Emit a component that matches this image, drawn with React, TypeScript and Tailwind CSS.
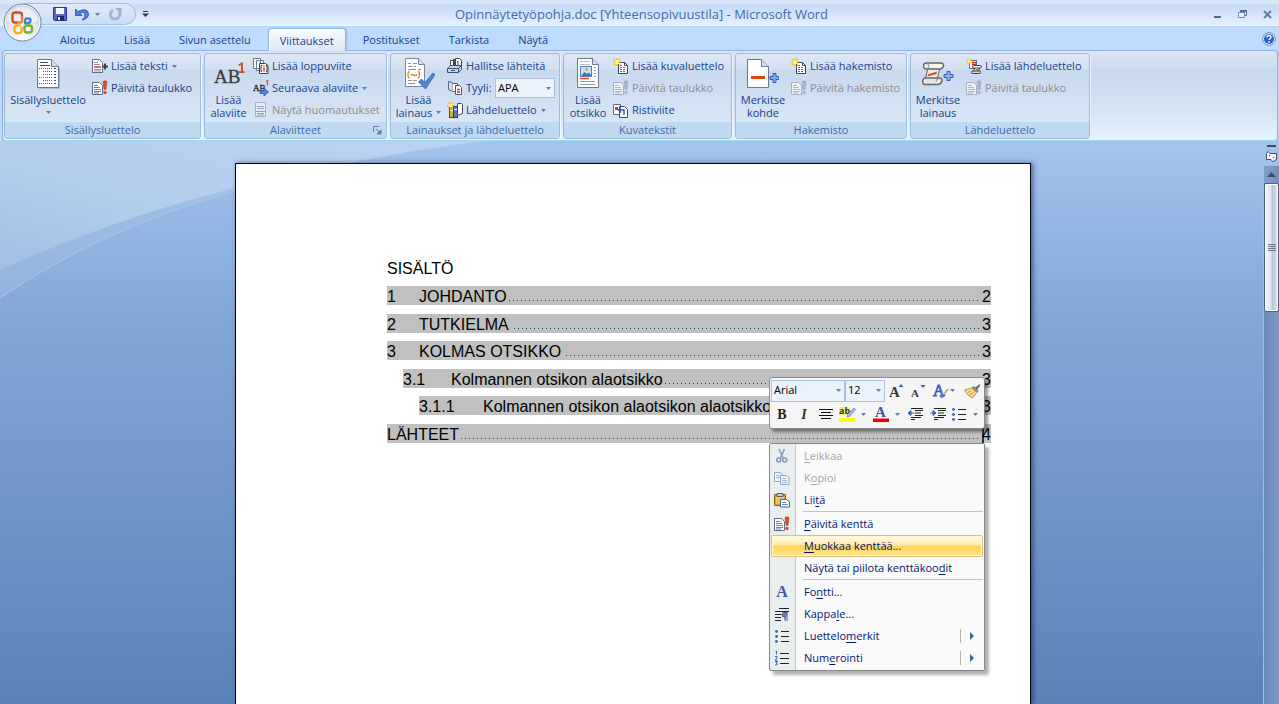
import React from "react";

const NAVY = "#2b3a5c";

function Caret({ className = "" }: { className?: string }) {
  return (
    <svg className={"shrink-0 " + className} width="5" height="3" viewBox="0 0 5 3" aria-hidden="true">
      <path d="M0 0h5L2.5 3z" fill="#5a7db5" />
    </svg>
  );
}

function Svg16({ children }: { children: React.ReactNode }) {
  return (
    <svg className="shrink-0" width="16" height="16" viewBox="0 0 16 16" aria-hidden="true">
      {children}
    </svg>
  );
}

function Svg32({ children }: { children: React.ReactNode }) {
  return (
    <svg className="shrink-0" width="32" height="32" viewBox="0 0 32 32" aria-hidden="true">
      {children}
    </svg>
  );
}

const Star = () => (
  <g>
    <path d="M4 0v8M0 4h8M1 1l6 6M7 1L1 7" stroke="#f2b61c" strokeWidth="1.2" />
    <circle cx="4" cy="4" r="2.2" fill="#fff27a" />
  </g>
);

/* ---- large icons ---- */

const TocIcon = () => (
  <Svg32>
    <path d="M5.5 1.5h14l7 7v21h-21z" fill="#fff" stroke="#6b7890" />
    <path d="M19.5 1.5v7h7" fill="#d5deec" stroke="#6b7890" />
    <path d="M8 4.5h8M8 7.5h10" stroke="#444f63" />
    <g stroke="#53647f" strokeDasharray="1 1">
      <path d="M9 10.5h12M11 13.5h10M11 16.5h10M9 19.5h12M11 22.5h10M9 25.5h12" />
    </g>
    <path d="M22 10.5h2M22 13.5h2M22 16.5h2M22 19.5h2M22 22.5h2M22 25.5h2M7 10.5h1M7 19.5h1M7 25.5h1" stroke="#444f63" />
    <path d="M27.5 10v20.500H7" fill="none" stroke="#7f8ca3" strokeOpacity=".5" />
  </Svg32>
);

const FootnoteIcon = () => (
  <Svg32>
    <text x="1" y="25" fontSize="19" fontFamily="Liberation Serif, serif" fill="#3c3c3c" stroke="#3c3c3c" strokeWidth=".3">AB</text>
    <path d="M26 7.500l2.500-2h.5V14M26 14h5.500" fill="none" stroke="#d9532c" strokeWidth="2" />
  </Svg32>
);

const CitationIcon = () => (
  <Svg32>
    <path d="M2.5.5h13l6 6v22h-19z" fill="#fff" stroke="#7b8799" />
    <path d="M15.5.5v6h6" fill="#d9e1ee" stroke="#7b8799" />
    <path d="M5 5.500h3M10 5.500h4M5 8.500h4M11 8.500h2M15 11.500h3M5 11.500h8M5 22.500h4M10 22.500h4M5 25.500h7" stroke="#8d95a3" />
    <path d="M6.500 13.500q-1.500 0-1.500 3 0 3.500 1.500 3.500M15 13.500q1.500 0 1.500 3 0 3.500-1.500 3.500M7.500 17.500q1.700-2 3.200-.5t3.300-.5" fill="none" stroke="#d9812f" strokeWidth="1.300" />
    <path d="M15.500 24l3-3 3.500 3.500 8-9.500 2 1.500L22.500 31z" fill="#4b86d8" stroke="#2d5da8" strokeWidth=".7" />
  </Svg32>
);

const CaptionIcon = () => (
  <Svg32>
    <path d="M5.5.5h15l6 6v23h-21z" fill="#fff" stroke="#6b7890" />
    <path d="M20.5.5v6h6" fill="#d5deec" stroke="#6b7890" />
    <path d="M8 3.500h10M8 6.500h10" stroke="#b6bfcd" />
    <rect x="8.500" y="8.500" width="11" height="10" fill="#c3e2fb" stroke="#5b7fb5" />
    <path d="M9 18l3.500-4 2.500 2 2-1.500 2.500 3.500z" fill="#3a76b8" />
    <circle cx="14.500" cy="11.500" r="1.400" fill="#f0a030" />
    <path d="M8 20.500h9" stroke="#d9472b" strokeWidth="1.500" />
    <path d="M8 23.500h15M8 26.500h15M22 9.500h2M22 12.500h2M22 15.500h2M22 18.500h2" stroke="#8f98a8" />
  </Svg32>
);

const MarkEntryIcon = () => (
  <Svg32>
    <path d="M.5 1.500h14l7 7v21H.5z" fill="#fff" stroke="#6b7890" />
    <path d="M14.5 1.500v7h7" fill="#d5deec" stroke="#6b7890" />
    <rect x="4" y="18" width="14" height="3" fill="#e0440c" />
    <path d="M26 15.500h3v3h3v3h-3v3h-3v-3h-3v-3h3z" fill="#7fa8e8" stroke="#2f5fb3" />
  </Svg32>
);

const MarkCitationIcon = () => (
  <Svg32>
    <path d="M6 10h12l-3 12H3z" fill="#efede9" stroke="#747478" strokeWidth="1.200" />
    <path d="M4.500 5h14.500q3 .5 2.500 3t-3.500 3H4.500Q1.500 11 1.500 8t3-3z" fill="#f7f6f3" stroke="#66666a" strokeWidth="1.400" />
    <path d="M4 10.500q3 0 3-2.500t-2.500-2" fill="none" stroke="#8a8a8e" />
    <path d="M3 20h14.500q3 .5 2.500 3t-3.500 3.500H3Q0 26 .700 23T3 20z" fill="#e6e4e0" stroke="#66666a" strokeWidth="1.400" />
    <path d="M17 20.500q-3 .5-3 3" fill="none" stroke="#8a8a8e" />
    <path d="M6 16.500l9-3-.5 2.500-9 2.500z" fill="#d9472b" />
    <path d="M25 13.500h3v3h3v3h-3v3h-3v-3h-3v-3h3z" fill="#8fb2ea" stroke="#2f5fb3" />
  </Svg32>
);

/* ---- small icons ---- */

const AddTextIcon = () => (
  <Svg16>
    <path d="M.5 1.500h7l3 3v10H.5z" fill="#fff" stroke="#5f6c84" />
    <path d="M2 4.500h4M2 6.500h6M2 11.500h7M2 13h7" stroke="#8892a3" />
    <path d="M2 9h7" stroke="#dd3b1e" strokeWidth="1.500" />
    <path d="M13 5.500v6M10.500 8.500H16" stroke="#3b4048" strokeWidth="2" />
  </Svg16>
);

const UpdateTableIcon = ({ muted = false }: { muted?: boolean }) => (
  <Svg16>
    <path d="M.5 2.500h7l3 3v9H.5z" fill={muted ? "#eef2f8" : "#fff"} stroke={muted ? "#a3afc2" : "#5f6d86"} />
    <path d="M2 5.500h4M2 7.500h6M2 9.500h7M2 11.500h7M2 13h5" stroke={muted ? "#a9b8d0" : "#6f8098"} />
    <path d="M11 1.500q2-1.500 4 0L14 9.500h-2z" fill={muted ? "#a7b4cb" : "#e04a21"} stroke={muted ? "#93a1ba" : "#b93312"} strokeWidth=".5" />
    <circle cx="13" cy="12.500" r="1.700" fill={muted ? "#a7b4cb" : "#e04a21"} />
  </Svg16>
);

const EndnoteIcon = () => (
  <Svg16>
    <path d="M.5.5h7v10h-7zM3.500 2.500h7v10h-7z" fill="#fff" stroke="#6b7890" />
    <path d="M6.500 5.500h6l2.500 2v8H6.500z" fill="#fff" stroke="#3c4658" />
    <path d="M9 7.500H8v6h1M13 7.500h1v6h-1" fill="none" stroke="#3c3c3c" />
    <path d="M11 7.500v1M11 9.500v4" stroke="#d22a1a" strokeWidth="1.500" />
  </Svg16>
);

const NextFootnoteIcon = () => (
  <Svg16>
    <text x="0" y="11" fontSize="9" fontFamily="Liberation Serif, serif" fill="#222" stroke="#222" strokeWidth=".3">AB</text>
    <path d="M13 1.500l1.500-1v5" fill="none" stroke="#d9532c" strokeWidth="1.300" />
    <path d="M7 10.500h4V8l4.500 4L11 16v-2.500H7z" fill="#4f86de" stroke="#264f9c" strokeWidth=".7" />
  </Svg16>
);

const ShowNotesIcon = () => (
  <Svg16>
    <path d="M2.500.5h10v14h-10z" fill="#e8eef7" stroke="#9fb0cc" />
    <path d="M4 4.500h7M4 6.500h7M2 9.500h11M4 11.500h7M4 13h7" stroke="#96a6c2" />
  </Svg16>
);

const ManageSourcesIcon = () => (
  <Svg16>
    <path d="M3.500 2.500h4v7h-4zM6.500 1.500h4v8h-4z" fill="#fff" stroke="#3c4658" />
    <path d="M8.500.5h4l2 2v7h-6z" fill="#fff" stroke="#3c4658" />
    <path d="M11 3v4M10 4l1-1" stroke="#3c4658" />
    <path d="M1.500 9.500l2-2h11v4l-3 3h-11v-4z" fill="#c3d4ee" stroke="#3a5079" />
    <path d="M.5 10.500h11v4M11.500 10.500l3-3" fill="none" stroke="#3a5079" />
    <path d="M4 12.500h4" stroke="#3a5079" />
  </Svg16>
);

const StyleIcon = () => (
  <Svg16>
    <path d="M1.500 1.500l4 1v9l-4-2z" fill="#cfdaea" stroke="#5b6a84" />
    <path d="M5.500 3.500h5v8h-5" fill="#fff" stroke="#5b6a84" />
    <path d="M8.500 5.500h4l2 2v7h-6z" fill="#fff" stroke="#4a566c" />
    <path d="M10 9.500h3M10 12h3" stroke="#d3301e" strokeWidth="1.500" />
  </Svg16>
);

const BibliographyIcon = () => (
  <Svg16>
    <rect x="2.500" y="5.500" width="4" height="10" fill="#e2ad26" stroke="#59461a" />
    <rect x="6.500" y="4.500" width="4" height="11" fill="#5b7dc0" stroke="#2d3b5e" />
    <path d="M10.500 1.500h4l1 1v9l-5 2z" fill="#fff" stroke="#3c4658" />
    <path d="M3 8.500h3M7 7.500h3" stroke="#fff4c8" />
    <g transform="scale(.9)"><Star /></g>
  </Svg16>
);

const NewListIcon = () => (
  <Svg16>
    <path d="M5.500 4.500h6l3 3v8h-9z" fill="#fff" stroke="#3c4658" />
    <path d="M11.500 4.500v3h3" fill="none" stroke="#3c4658" />
    <path d="M7 7.500h3M7 9.500h6M7 11.500h6M7 13.500h6" stroke="#5f6d86" strokeDasharray="2 1" />
    <Star />
  </Svg16>
);

const CrossRefIcon = () => (
  <Svg16>
    <path d="M.5 2.500h7v10h-7z" fill="#fff" stroke="#5f6d86" />
    <rect x="2" y="5" width="3" height="3" fill="#e0361e" />
    <path d="M6.500 4.500h5l3 3v8h-8z" fill="#fff" stroke="#3c4658" />
    <path d="M6 8h5v5M8 5.500L5.500 8 8 10.500" fill="none" stroke="#2d56b0" strokeWidth="1.400" />
  </Svg16>
);

const NewAuthoritiesIcon = () => (
  <Svg16>
    <path d="M3.500 2.500h7v8h-7z" fill="#fff" stroke="#5f6d86" />
    <path d="M6 4.500h4M6 6.500h4" stroke="#d9301e" strokeWidth="1.300" />
    <path d="M9 9h5l-1.500 4.500h-5z" fill="#f4f1ec" stroke="#4c4c50" />
    <rect x="6.500" y="7.500" width="9" height="2.500" rx="1.200" fill="#fff" stroke="#3c3c40" />
    <rect x="5.500" y="13" width="9" height="2.500" rx="1.200" fill="#e0ddd8" stroke="#3c3c40" />
    <path d="M9.500 12l3-.7" stroke="#d9472b" strokeWidth="1.200" />
    <g transform="scale(.8)"><Star /></g>
  </Svg16>
);

/* ---- ribbon ---- */

type Small = { icon: React.ReactNode; text: string; caret?: boolean; off?: boolean };

function SmallButton({ icon, text, caret, off }: Small) {
  return (
    <button disabled={off} className={"flex h-[22px] items-center gap-[3px] whitespace-nowrap " + (off ? "text-[#8d8d8d]" : "text-[#15428b]")}>
      {icon}
      {text}
      {caret && <Caret className="ml-px" />}
    </button>
  );
}

function BigButton({ icon, lines, caret, width }: { icon: React.ReactNode; lines: string[]; caret?: boolean; width: string }) {
  const single = lines.length === 1;
  return (
    <button className={"flex shrink-0 flex-col items-center gap-[3px] pt-[3px] leading-[13px] whitespace-nowrap " + width}>
      {icon}
      <span className="flex flex-col items-center">
        <span>{lines[0]}</span>
        <span className="flex h-[13px] items-center gap-1">
          {!single && lines[1]}
          {caret && <Caret />}
        </span>
      </span>
    </button>
  );
}

function Group({ title, width, launcher, children }: { title: string; width: string; launcher?: boolean; children: React.ReactNode }) {
  return (
    <section
      aria-label={title}
      className={"flex h-[86px] shrink-0 flex-col overflow-hidden rounded-[3px] border border-[#9ebbdd] bg-[linear-gradient(#dde8f5_0,#d2e0f1_15px,#c8d9ee_16px,#dceaf7_100%)] shadow-[1px_1px_0_#eef6ff] " + width}
    >
      <div className="flex flex-1 pt-px">{children}</div>
      <h2 className="relative h-4 bg-[#c1d8f1] text-center leading-[15px] text-[#3e6aaa]">
        {title}
        {launcher && (
          <button aria-label={title + ", asetukset"} className="absolute top-1 right-1">
            <svg width="9" height="9" viewBox="0 0 9 9" aria-hidden="true">
              <path d="M.5 6V.5H6" fill="none" stroke="#5f82b4" />
              <path d="M3 3l4 4M8 4v4H4z" fill="#5f82b4" stroke="#5f82b4" />
            </svg>
          </button>
        )}
      </h2>
    </section>
  );
}

const Col = ({ children }: { children: React.ReactNode }) => <div className="flex flex-col items-start pl-px">{children}</div>;

function Combo({ label, value, className }: { label: string; value: string; className: string }) {
  return (
    <span className={"relative flex " + className}>
      <select aria-label={label} defaultValue={value} className="w-full appearance-none border border-[#abc1de] bg-[#eaf2fb] pl-[2px] text-black outline-none">
        <option>{value}</option>
      </select>
      <span className="pointer-events-none absolute inset-y-0 right-[4px] flex items-center"><Caret /></span>
    </span>
  );
}

function Ribbon() {
  return (
    <div className="mr-px ml-[2px] flex h-[91px] gap-[3px] rounded-[4px] border border-[#8db2e3] border-b-[#9dd6ee] bg-[linear-gradient(#dbe6f4_0,#cfddec_17px,#c6d8ee_18px,#d5e4f1_60px,#e4f5ff_100%)] pt-[2px] pl-px shadow-[0_1px_1px_#8aa8cc]">
      <Group title="Sisällysluettelo" width="w-[197px]">
        <BigButton width="w-[86px]" icon={<TocIcon />} lines={["Sisällysluettelo"]} caret />
        <Col>
          <SmallButton icon={<AddTextIcon />} text="Lisää teksti" caret />
          <SmallButton icon={<UpdateTableIcon />} text="Päivitä taulukko" />
        </Col>
      </Group>
      <Group title="Alaviitteet" width="w-[183px]" launcher>
        <BigButton width="w-[47px]" icon={<FootnoteIcon />} lines={["Lisää", "alaviite"]} />
        <Col>
          <SmallButton icon={<EndnoteIcon />} text="Lisää loppuviite" />
          <SmallButton icon={<NextFootnoteIcon />} text="Seuraava alaviite" caret />
          <SmallButton icon={<ShowNotesIcon />} text="Näytä huomautukset" off />
        </Col>
      </Group>
      <Group title="Lainaukset ja lähdeluettelo" width="w-[170px]">
        <BigButton width="w-[55px]" icon={<CitationIcon />} lines={["Lisää", "lainaus"]} caret />
        <Col>
          <SmallButton icon={<ManageSourcesIcon />} text="Hallitse lähteitä" />
          <div className="flex h-[22px] items-center gap-[3px]">
            <StyleIcon />
            <span className="w-[26px]">Tyyli:</span>
            <Combo label="Tyyli" value="APA" className="h-[20px] w-[60px]" />
          </div>
          <SmallButton icon={<BibliographyIcon />} text="Lähdeluettelo" caret />
        </Col>
      </Group>
      <Group title="Kuvatekstit" width="w-[169px]">
        <BigButton width="w-[48px]" icon={<CaptionIcon />} lines={["Lisää", "otsikko"]} />
        <Col>
          <SmallButton icon={<NewListIcon />} text="Lisää kuvaluettelo" />
          <SmallButton icon={<UpdateTableIcon muted />} text="Päivitä taulukko" off />
          <SmallButton icon={<CrossRefIcon />} text="Ristiviite" />
        </Col>
      </Group>
      <Group title="Hakemisto" width="w-[172px]">
        <BigButton width="w-[54px]" icon={<MarkEntryIcon />} lines={["Merkitse", "kohde"]} />
        <Col>
          <SmallButton icon={<NewListIcon />} text="Lisää hakemisto" />
          <SmallButton icon={<UpdateTableIcon muted />} text="Päivitä hakemisto" off />
        </Col>
      </Group>
      <Group title="Lähdeluettelo" width="w-[180px]">
        <BigButton width="w-[54px]" icon={<MarkCitationIcon />} lines={["Merkitse", "lainaus"]} />
        <Col>
          <SmallButton icon={<NewAuthoritiesIcon />} text="Lisää lähdeluettelo" />
          <SmallButton icon={<UpdateTableIcon muted />} text="Päivitä taulukko" off />
        </Col>
      </Group>
    </div>
  );
}

/* ---- title bar and tabs ---- */

const OfficeButton = () => (
  <button aria-label="Office-painike" className="absolute top-[2px] left-[2px] z-10">
    <svg width="41" height="41" viewBox="0 0 41 41" aria-hidden="true">
      <defs>
        <radialGradient id="orb" cx=".5" cy=".8" r=".8">
          <stop offset="0" stopColor="#fff" />
          <stop offset=".5" stopColor="#e2e7ee" />
          <stop offset="1" stopColor="#aebccd" />
        </radialGradient>
      </defs>
      <circle cx="20.500" cy="20.500" r="18.500" fill="url(#orb)" stroke="#7388a8" />
      <circle cx="20.500" cy="20.500" r="17.300" fill="none" stroke="#fff" strokeOpacity=".8" />
      <path d="M5 19a15.500 14.500 0 0 1 31 0q-15 5-31 0z" fill="#f7f9fc" opacity=".7" />
      <g fill="none" strokeWidth="2.400" strokeLinejoin="round">
        <path d="M15.500 20.500h-2.500q-2.500 0-2.500-2.500v-5q0-2.500 2.500-2.500h4.500q2.500 0 2.500 2.500v3" stroke="#dd4a22" />
        <path d="M20 14v4.500q0 2-2 2h-3" stroke="#f0842c" />
        <path d="M23 16.500h3.500q2 0 2 2t-2 2.500h-3.500v-4.500" stroke="#3f86d0" />
        <path d="M18.500 23.500h-3.500q-2.500 0-2.500 2.500v2.500q0 2.500 2.500 2.500h2.500q2 0 2-2v-4" stroke="#f3b21b" />
        <path d="M22.500 24v4q0 2.500 2.500 2.500h2.500q2.500 0 2.500-2.500v-2q0-2.500-2.500-2.500h-5" stroke="#76ae2a" />
      </g>
    </svg>
  </button>
);

function TitleBar() {
  return (
    <header className="grid h-[27px] grid-cols-[1fr_auto_1fr] border-b border-[#b3d8f4] bg-[linear-gradient(#dce9fb_0,#d5e4fa_4px,#c5daf6_5px,#e3efff_24px,#f0f7ff_100%)]">
      <div className="flex items-center pl-[24px]">
        <div className="flex h-[22px] items-center rounded-r-[11px] border border-[#a4bde0] bg-[linear-gradient(#dfebfb,#cbdcf4)] pl-[28px]">
          <button aria-label="Tallenna" className="mr-2">
            <svg width="14" height="14" viewBox="0 0 14 14" aria-hidden="true">
              <path d="M.5.5h13v13h-12l-1-1z" fill="#5a66c8" stroke="#2c3690" />
              <path d="M3 1h8v6H3z" fill="#f4f7ff" />
              <path d="M4 9h7v4H4z" fill="#1f2766" />
              <path d="M5 10h2v3H5z" fill="#fff" />
            </svg>
          </button>
          <button aria-label="Kumoa" className="mr-[6px]">
            <svg width="14" height="13" viewBox="0 0 14 13" aria-hidden="true">
              <path d="M.5 1v6.500h6.500L5 5.500q3.500-2 4.800.2Q11 9 7 12q7-1.500 6.500-6.500Q12-1 3 3.500z" fill="#4f7edb" stroke="#2b50a4" strokeWidth=".8" />
            </svg>
          </button>
          <button aria-label="Kumoa-luettelo" className="mr-[9px]"><Caret /></button>
          <button aria-label="Toista" disabled className="mr-[13px]">
            <svg width="13" height="13" viewBox="0 0 13 13" aria-hidden="true">
              <path d="M4 2.200A4.700 4.700 0 1 0 10 4" fill="none" stroke="#a3b4d0" strokeWidth="2.800" />
              <path d="M6 0h6.500v6.500z" fill="#a3b4d0" />
            </svg>
          </button>
        </div>
        <button aria-label="Mukauta pikatyökaluriviä" className="ml-[6px]">
          <svg width="7" height="6" viewBox="0 0 7 6" aria-hidden="true">
            <path d="M1 .5h5" stroke={NAVY} />
            <path d="M0 2.500h7L3.500 6z" fill={NAVY} />
          </svg>
        </button>
      </div>
      <h1 className="pl-1 text-center text-[13px] leading-[28px] whitespace-nowrap text-[#3e6aaa]">
        Opinnäytetyöpohja.doc [Yhteensopivuustila] - Microsoft Word
      </h1>
      <div className="flex items-center justify-end gap-[16px] pr-[7px]">
        <button aria-label="Pienennä">
          <svg width="9" height="10" viewBox="0 0 9 10" aria-hidden="true"><path d="M1 8h7" stroke="#596b88" strokeWidth="2" /></svg>
        </button>
        <button aria-label="Palauta">
          <svg width="9" height="8" viewBox="0 0 9 8" aria-hidden="true">
            <path d="M2.500 2V.5h6v5H7" fill="none" stroke="#596b88" />
            <path d="M.5 2.500h6v5h-6z" fill="#e9f1fc" stroke="#7088b0" />
            <path d="M2 1h7" stroke="#596b88" strokeWidth="2" />
          </svg>
        </button>
        <button aria-label="Sulje">
          <svg width="9" height="9" viewBox="0 0 9 9" aria-hidden="true"><path d="M1 1l7 7M8 1L1 8" stroke="#657a9e" strokeWidth="2" /></svg>
        </button>
      </div>
    </header>
  );
}

const TABS = ["Aloitus", "Lisää", "Sivun asettelu", "Viittaukset", "Postitukset", "Tarkista", "Näytä"];

function Tabs() {
  return (
    <nav className="flex h-[23px] items-end gap-px pr-[3px] pl-[46px]">
      {TABS.map((t) =>
        t === "Viittaukset" ? (
          <button key={t} className="relative z-[1] mx-[2px] -mb-px h-[23px] rounded-t-[4px] border border-b-0 border-[#8db2e3] bg-[linear-gradient(#fbfdff,#dbe6f4)] px-[11px] pt-[2px] shadow-[inset_1px_1px_0_#ffffff,1px_0_2px_#9dbbe0]">
            {t}
          </button>
        ) : (
          <button key={t} className="h-[22px] px-[14px] pt-[2px]">{t}</button>
        )
      )}
      <button aria-label="Ohje" className="ml-auto self-center">
        <svg width="14" height="14" viewBox="0 0 14 14" aria-hidden="true">
          <circle cx="7" cy="7" r="6.300" fill="#fff" stroke="#5b7fb8" />
          <circle cx="7" cy="7" r="5" fill="#1f5fd6" />
          <path d="M5 5.500q0-2 2-2t2 1.800q0 1-1.200 1.500-.8.400-.8 1.200" fill="none" stroke="#fff" strokeWidth="1.400" />
          <circle cx="7" cy="10" r=".9" fill="#fff" />
        </svg>
      </button>
    </nav>
  );
}

/* ---- document ---- */

const TOC = [
  { no: "1", text: "JOHDANTO", page: "2", indent: "", tab: "w-[32px]" },
  { no: "2", text: "TUTKIELMA", page: "3", indent: "", tab: "w-[32px]", space: true },
  { no: "3", text: "KOLMAS OTSIKKO", page: "3", indent: "", tab: "w-[32px]", space: true },
  { no: "3.1", text: "Kolmannen otsikon alaotsikko", page: "3", indent: "ml-[16px]", tab: "w-[48px]" },
  { no: "3.1.1", text: "Kolmannen otsikon alaotsikon alaotsikko", page: "3", indent: "ml-[32px]", tab: "w-[64px]" },
  { no: "", text: "LÄHTEET", page: "4", indent: "", tab: "w-0" },
];

function Contents() {
  return (
    <div className="pt-[95px] pr-[39px] pl-[151px] font-['Liberation_Sans',Arial,sans-serif] text-[16px] text-black">
      <h2 className="leading-[19px]">SISÄLTÖ</h2>
      <ol className="mt-[8px] flex h-[157px] flex-col justify-between">
        {TOC.map((r) => (
          <li key={r.text} className={"flex h-[19px] bg-[#c0c0c0] leading-[21px] whitespace-nowrap " + r.indent}>
            <span className={r.tab}>{r.no}</span>
            <span>{r.text}</span>
            <span className={"mr-[2px] mb-[4px] h-px flex-1 self-end bg-[linear-gradient(to_right,#1c4a60_1px,transparent_1px)] bg-[length:4px_1px] " + (r.space ? "ml-[5px]" : "ml-[2px]")} />
            <span className={r.page === "4" ? "shadow-[inset_2px_0_0_#333]" : ""}>{r.page}</span>
          </li>
        ))}
      </ol>
    </div>
  );
}

const BulletsIcon = () => (
  <Svg16>
    <path d="M7 3.500h8M7 8.500h8M7 13.500h8" stroke="#222" />
    <g fill="#3d64b4"><circle cx="2.500" cy="3.500" r="1.400" /><circle cx="2.500" cy="8.500" r="1.400" /><circle cx="2.500" cy="13.500" r="1.400" /></g>
  </Svg16>
);

const NumberingIcon = () => (
  <Svg16>
    <path d="M6 3.500h9M6 8.500h9M6 13.500h9" stroke="#222" />
    <path d="M1.500 2l1-1v3.500M1 6.500h2v1.500l-2 2h2.500M1 11.500h2.500L2 13q2 0 1 2H1" fill="none" stroke="#3d64b4" />
  </Svg16>
);

const Glyph = ({ children, className }: { children: React.ReactNode; className: string }) => (
  <span className={"flex h-4 items-center justify-center font-['Liberation_Serif',serif] font-bold " + className}>{children}</span>
);

const IndentIcon = ({ right = false }: { right?: boolean }) => (
  <Svg16>
    <path d="M4 2.500h12M8 4.500h8M8 7h6M8 9.500h8M4 11.500h10M4 13.500h4" stroke="#222" strokeWidth="1.200" />
    <path d={right ? "M0 7h4M3 4.500L6 7 3 9.500z" : "M3 7h4M4 4.500L1 7l3 2.500z"} fill="#3d64b4" stroke="#3d64b4" />
  </Svg16>
);

function MiniToolbar() {
  return (
    <div role="toolbar" aria-label="Pienoistyökalurivi" className="absolute top-[213px] left-[533px] flex w-[216px] flex-col rounded-[3px] border border-[#8a8a8a] bg-[#f5f5f5] p-px pb-[2px] shadow-[3px_3px_3px_rgba(0,0,0,0.4)]">
      <div className="flex h-[23px] items-center">
        <Combo label="Fontti" value="Arial" className="h-[22px] w-[74px]" />
        <Combo label="Fonttikoko" value="12" className="h-[22px] w-[40px]" />
        <button aria-label="Suurenna fonttia" className="ml-[3px] w-[16px]">
          <svg width="16" height="16" viewBox="0 0 16 16" aria-hidden="true">
            <text x="1" y="14" fontSize="15" fontWeight="bold" fontFamily="Liberation Serif, serif" fill="#3b3b3b">A</text>
            <path d="M10.500 4h5L13 1z" fill="#3d64b4" />
          </svg>
        </button>
        <button aria-label="Pienennä fonttia" className="ml-[7px] w-[16px]">
          <svg width="16" height="16" viewBox="0 0 16 16" aria-hidden="true">
            <text x="0" y="14" fontSize="11" fontWeight="bold" fontFamily="Liberation Serif, serif" fill="#3b3b3b">A</text>
            <path d="M9.500 2h5L12 5z" fill="#3d64b4" />
          </svg>
        </button>
        <button aria-label="Pikatyylit" className="ml-[5px] flex items-center">
          <svg width="17" height="16" viewBox="0 0 17 16" aria-hidden="true">
            <text x="1" y="13" fontSize="16" fontFamily="Liberation Serif, serif" fill="#9fbdea" stroke="#3560b8" strokeWidth=".9">A</text>
            <path d="M15.500 5.500l1.200 1.200-3.500 4-1.500-1z" fill="#c9a36a" />
            <path d="M8 15q3-4.500 5-4l.5 1q-1.500 3-5.500 3z" fill="#3f7fd6" />
          </svg>
          <Caret className="ml-px" />
        </button>
        <button aria-label="Muotoilusivellin" className="ml-[9px]">
          <Svg16>
            <path d="M15.500 1L11 5l1.500 2L16 3z" fill="#666" />
            <path d="M8 4.500l2-1 4 4-1 2z" fill="#8d929e" stroke="#555" strokeWidth=".6" />
            <path d="M7.500 5L.5 7q3 6 8 8l4-5.500z" fill="#f5dc88" stroke="#a8812a" strokeWidth=".8" />
            <path d="M4 9.500L7 8M6 12l3.500-3" stroke="#b98f33" strokeWidth=".8" />
          </Svg16>
        </button>
      </div>
      <div className="flex h-[24px] items-center">
        <button aria-label="Lihavointi" className="w-[22px]"><Glyph className="text-[14px] text-[#222]">B</Glyph></button>
        <button aria-label="Kursivointi" className="w-[22px]"><Glyph className="text-[14px] text-[#333] italic">I</Glyph></button>
        <button aria-label="Keskitä" className="ml-[3px]">
          <Svg16><path d="M1 3.500h14M3 6.500h10M1 9.500h14M3 12.500h10" stroke="#111" /></Svg16>
        </button>
        <button aria-label="Korostusväri" className="ml-[5px] flex items-center">
          <svg width="18" height="18" viewBox="0 0 18 18" aria-hidden="true">
            <path d="M0 2h10v8H0z" fill="#f1ee7c" />
            <text x="0" y="9" fontSize="9" fontWeight="bold" fontFamily="Open Sans, sans-serif" fill="#333">ab</text>
            <path d="M15 3l1.500 1.500L11 11l-3 1 1-3z" fill="#a9c4ea" stroke="#5c79a8" strokeWidth=".7" />
            <path d="M0 13h16v4H0z" fill="#ffff00" />
          </svg>
          <Caret className="ml-[4px]" />
        </button>
        <button aria-label="Fontin väri" className="ml-[6px] flex items-center">
          <svg width="17" height="18" viewBox="0 0 17 18" aria-hidden="true">
            <text x="3" y="12" fontSize="15" fontWeight="bold" fontFamily="Liberation Serif, serif" fill="#3a5ba5">A</text>
            <path d="M1 13.500h16V17H1z" fill="#f40000" />
          </svg>
          <Caret className="ml-[6px]" />
        </button>
        <button aria-label="Pienennä sisennystä" className="ml-[7px]"><IndentIcon /></button>
        <button aria-label="Suurenna sisennystä" className="ml-[7px]"><IndentIcon right /></button>
        <button aria-label="Luettelomerkit" className="ml-[5px] flex items-center">
          <BulletsIcon />
          <Caret className="ml-[6px]" />
        </button>
      </div>
    </div>
  );
}

const CutIcon = () => (
  <Svg16>
    <path d="M5 1l4 9M10.500 1L6.500 10" stroke="#8fa3c4" strokeWidth="1.800" />
    <circle cx="4.700" cy="12" r="2" fill="none" stroke="#8499bf" strokeWidth="1.500" />
    <circle cx="10.800" cy="12" r="2" fill="none" stroke="#8499bf" strokeWidth="1.500" />
  </Svg16>
);

const CopyIcon = () => (
  <Svg16>
    <path d="M.5 2.500h6l2 2v7h-8z" fill="#eef3fb" stroke="#94a8cb" />
    <path d="M6.500 5.500h6l2.500 2v7H6.500z" fill="#eef3fb" stroke="#94a8cb" />
    <path d="M2 5.500h4M2 7.500h4M8 8.500h4M8 10.500h5M8 12.500h5" stroke="#a5b5d2" />
  </Svg16>
);

const PasteIcon = () => (
  <Svg16>
    <path d="M.5 2.500h11v11H.5z" fill="#dca22c" stroke="#8a6218" />
    <path d="M2 4h8v8H2z" fill="#efc55a" />
    <path d="M3 1.500h6v3H3z" fill="#c9ccd3" stroke="#5b5f68" />
    <path d="M6.500 7.500h6l3 2.500v5h-9z" fill="#fff" stroke="#44608f" />
    <path d="M8 10.500h4M8 12.500h6" stroke="#6d86b3" />
  </Svg16>
);

const ParagraphIcon = () => (
  <Svg16>
    <path d="M5 2.500h10M1 5.500h14M1 8.500h6M1 11.500h6M1 14.500h6" stroke="#222" />
    <path d="M13.500 6.500H10a2.200 2.200 0 0 0 0 4.400h1V15M13 6.500V15" fill="#6b82b8" stroke="#4a5f96" />
  </Svg16>
);

type Item = { icon?: React.ReactNode; text: [string, string, string]; off?: boolean; hot?: boolean; sub?: boolean };

const MENU: Item[][] = [
  [
    { icon: <CutIcon />, text: ["", "L", "eikkaa"], off: true },
    { icon: <CopyIcon />, text: ["K", "o", "pioi"], off: true },
    { icon: <PasteIcon />, text: ["Lii", "t", "ä"] },
  ],
  [
    { icon: <UpdateTableIcon />, text: ["", "P", "äivitä kenttä"] },
    { text: ["", "M", "uokkaa kenttää..."], hot: true },
    { text: ["Näytä tai piilota kenttäkoo", "d", "it"] },
  ],
  [
    { icon: <Glyph className="w-4 text-[16px] text-[#3a5ba5]">A</Glyph>, text: ["Fo", "n", "tti..."] },
    { icon: <ParagraphIcon />, text: ["Kappa", "l", "e..."] },
    { icon: <BulletsIcon />, text: ["Luettelo", "m", "erkit"], sub: true },
    { icon: <NumberingIcon />, text: ["Num", "e", "rointi"], sub: true },
  ],
];

function MenuItem({ icon, text, off, hot, sub }: Item) {
  const hotCls = hot ? "rounded-[2px] border border-[#d9c27a] bg-[linear-gradient(#fffdf0_0,#ffe9a6_9px,#ffd35a_10px,#ffe68f_100%)] shadow-[inset_0_0_0_1px_#fff6d0]" : "border border-transparent";
  return (
    <li role="none">
      <button role="menuitem" disabled={off} className={"flex h-[22px] w-full items-center whitespace-nowrap " + (off ? "text-[#a5a5a5] " : "text-[#00156e] ") + hotCls}>
        <span className="mr-[14px] ml-[2px] w-4">{icon}</span>
        <span className="flex-1 text-left">
          {text[0]}
          <u className="underline-offset-2">{text[1]}</u>
          {text[2]}
        </span>
        {sub && (
          <span className="flex h-[14px] items-center border-l border-[#b5b5a5] pr-[8px] pl-[9px]">
            <svg width="4" height="8" viewBox="0 0 4 8" aria-hidden="true"><path d="M0 0l4 4-4 4z" fill="#3f5fa8" /></svg>
          </span>
        )}
      </button>
    </li>
  );
}

function ContextMenu() {
  return (
    <div role="menu" className="absolute top-[279px] left-[533px] w-[216px] rounded-[2px] border border-[#868686] bg-[linear-gradient(to_right,#e9eeee_25px,#c5c5c5_25px,#c5c5c5_26px,#fafafa_26px)] p-px shadow-[4px_4px_3px_rgba(0,0,0,0.3)]">
      {MENU.map((part, i) => (
        <ul key={i} role="none">
          {i > 0 && <li role="separator" className="ml-[32px] h-[2px] border-t border-[#c5c5c5]" />}
          {part.map((m) => <MenuItem key={m.text.join("")} {...m} />)}
        </ul>
      ))}
    </div>
  );
}

function ScrollBar() {
  return (
    <div className="flex w-4 flex-col">
      <div className="flex h-[25px] flex-col items-center pt-[4px]">
        <div className="h-[2px] w-[9px] bg-[#3b4a6b]" />
        <button aria-label="Näytä viivain" className="mt-[3px]">
          <svg width="13" height="13" viewBox="0 0 13 13" aria-hidden="true">
            <path d="M1.500 3.500L3 1.500l2 2h6.500v6L10 10l-2 2-2-2.500H1.500z" fill="#f4f4f8" stroke="#4a4f66" />
            <path d="M4 5.500h1M8 7.500h1" stroke="#4a4f66" />
          </svg>
        </button>
      </div>
      <div className="flex flex-1 flex-col border-l border-[#9dbce6] bg-[linear-gradient(to_right,#6788b8,#7b9ac6)]">
        <button aria-label="Vieritä ylös" className="flex h-[17px] items-center justify-center bg-[linear-gradient(to_right,#7f9fca,#6f8fbe)]">
          <svg width="9" height="5" viewBox="0 0 9 5" aria-hidden="true"><path d="M0 5h9L4.500 0z" fill="#3a4c74" /></svg>
        </button>
        <div className="flex h-[129px] flex-col items-center justify-center gap-px rounded-[2px] border border-[#4a6288] bg-[linear-gradient(to_right,#f2f5fa_0,#dfe6ef_6px,#b5c6da_7px,#dde6f1_100%)] shadow-[inset_0_0_0_1px_#ffffff]">
          <div className="h-px w-2 bg-[#6b7688]" />
          <div className="h-px w-2 bg-[#6b7688]" />
          <div className="h-px w-2 bg-[#6b7688]" />
          <div className="h-px w-2 bg-[#6b7688]" />
        </div>
      </div>
    </div>
  );
}

const Swoosh = () => (
  <svg className="absolute top-0 left-0" width="640" height="170" viewBox="0 0 640 170" aria-hidden="true">
    <defs>
      <linearGradient id="sw" x1="0" y1="1" x2="1" y2="0">
        <stop offset="0" stopColor="#a3bde4" />
        <stop offset=".4" stopColor="#b3cdec" />
        <stop offset="1" stopColor="#bed2f2" />
      </linearGradient>
    </defs>
    <path d="M0 157Q100 88 235 50T500 0H0z" fill="#bcd3f0" opacity=".2" />
    <path d="M0 157Q100 88 235 50" fill="none" stroke="#abc6ea" />
    <path d="M0 129Q115 77 235 47T480 0H0z" fill="url(#sw)" />
  </svg>
);

export default function App() {
  return (
    <div className="relative flex min-h-screen flex-col bg-[#bfdbff] font-['Open_Sans','Noto_Sans',sans-serif] text-[11px] text-[#15428b]">
      <OfficeButton />
      <TitleBar />
      <Tabs />
      <Ribbon />
      <main className="relative flex flex-1 overflow-hidden bg-[linear-gradient(#a4c4ee_0,#83a6d4_180px,#5b82b8_100%)]">
        <Swoosh />
        <div className="relative flex flex-1 justify-center pt-[22px] pl-[3px]">
          <article className="relative w-[796px] border border-b-0 border-black bg-white shadow-[2px_0_5px_rgba(20,40,80,0.6)]">
            <Contents />
            <MiniToolbar />
            <ContextMenu />
          </article>
        </div>
        <ScrollBar />
      </main>
    </div>
  );
}
